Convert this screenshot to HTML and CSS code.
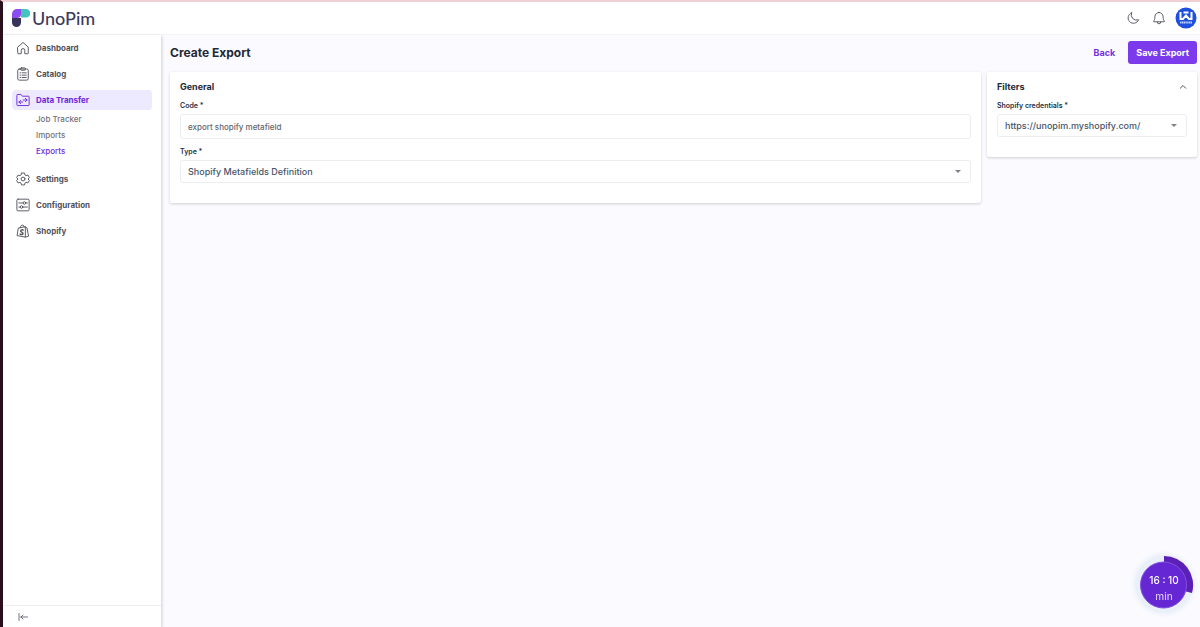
FILE: index.html
```html
<!DOCTYPE html>
<html lang="en">
<head>
    <meta charset="UTF-8">
    <meta name="viewport" content="width=device-width, initial-scale=1.0">
    <title>Create Export</title>
    <link rel="stylesheet" href="styles.css">
</head>
<body>
    <header class="topbar">
        <a class="logo" href="#">
            <svg width="18" height="18" viewBox="0 0 18 18" aria-hidden="true">
                <path d="M0 9V5a5 5 0 0 1 5-5h4v5a4 4 0 0 1-4 4z" fill="#8b4df0"/>
                <path d="M9 0h5a4.200 4.200 0 0 1 0 8.600H9z" fill="#45c4bd"/>
                <path d="M0 9h9v4.500a4.500 4.500 0 0 1-9 0z" fill="#38335a"/>
            </svg>
            <span>UnoPim</span>
        </a>
        <div class="topbar-actions">
            <button class="icon-btn" type="button" aria-label="Dark mode">
                <svg class="icon" width="14" height="14" viewBox="0 0 24 24"><path d="M9.500 3A9.300 9.300 0 1 0 21.500 15 9.300 9.300 0 0 1 9.500 3z"/></svg>
            </button>
            <button class="icon-btn" type="button" aria-label="Notifications">
                <svg class="icon" width="14" height="14" viewBox="0 0 24 24"><path d="M12 2.500a7 7 0 0 0-7 7c0 5-1 6-2.300 8-.3.600 0 1 .6 1h17.400c.6 0 .9-.4.600-1-1.300-2-2.300-3-2.300-8a7 7 0 0 0-7-7z"/><path d="M9 19a3 3 0 0 0 6 0"/></svg>
            </button>
            <button class="avatar" type="button" aria-label="Account">
                <svg width="22" height="22" viewBox="0 0 22 22">
                    <circle cx="11" cy="11" r="10.500" fill="#1f50dd"/>
                    <path d="M5.500 5v7h2.500L11 8.500l3 3.500h2.500V5M8.500 5.500h5" fill="none" stroke="#fff" stroke-width="2"/>
                    <path d="M5 15.500h12" stroke="#c4d2fa" stroke-width="2" stroke-dasharray="1.400 .4"/>
                </svg>
            </button>
        </div>
    </header>

    <div class="layout">
        <aside class="sidebar">
            <nav class="nav">
                <a class="nav-item" href="#">
                    <svg class="icon" width="14" height="14" viewBox="0 0 24 24"><path d="M3 10.500 12 2.500l9 8V21a.8.800 0 0 1-.8.800H15V16a3 3 0 0 0-6 0v5.800H3.800A.8.800 0 0 1 3 21z"/></svg>
                    Dashboard
                </a>
                <a class="nav-item" href="#">
                    <svg class="icon" width="14" height="14" viewBox="0 0 24 24"><rect x="3" y="3.500" width="18" height="19" rx="2.500"/><rect x="8" y="1.500" width="8" height="4" rx="1"/><path d="M7 10h1.500M11 10h6.500M7 14h1.500M11 14h6.500M7 18h1.500M11 18h6.500"/></svg>
                    Catalog
                </a>
                <a class="nav-item active" href="#">
                    <svg class="icon" width="14" height="14" viewBox="0 0 24 24"><path d="M1.500 3.500a1 1 0 0 1 1-1h6l2.500 3h10.500a1 1 0 0 1 1 1v14a1 1 0 0 1-1 1h-19a1 1 0 0 1-1-1z"/><path d="M5 15.500h6.500M8 12.500l-3 3 3 3M12.500 12H19M16 9l3 3-3 3"/></svg>
                    Data Transfer
                </a>
                <div class="subnav">
                    <a href="#">Job Tracker</a>
                    <a href="#">Imports</a>
                    <a class="current" href="#">Exports</a>
                </div>
                <a class="nav-item" href="#">
                    <svg class="icon" width="14" height="14" viewBox="0 0 24 24"><path d="M9.500 1.800h5l.8 3.200 2 1.200 3.200-.9 2.400 4.300-2.300 2.400 2.300 2.400-2.400 4.300-3.200-.9-2 1.200-.8 3.200h-5L8.700 19l-2-1.200-3.200.9-2.400-4.300L3.400 12 1.100 9.600l2.400-4.300 3.200.9 2-1.200z"/><circle cx="12" cy="12" r="3.300"/></svg>
                    Settings
                </a>
                <a class="nav-item" href="#">
                    <svg class="icon" width="14" height="14" viewBox="0 0 24 24"><rect x="1.500" y="2" width="21" height="20" rx="2"/><path d="M5 8.500h7M17 8.500h2.500M5 15.500h2M12 15.500h7.500"/><circle cx="14.500" cy="8.500" r="2.200"/><circle cx="9.500" cy="15.500" r="2.200"/></svg>
                    Configuration
                </a>
                <a class="nav-item" href="#">
                    <svg class="icon" width="14" height="14" viewBox="0 0 24 24"><path d="M4.500 7 16 4.500V22.500L2.500 20zM16 5l3 2 2.500 14-5.500 1.500M7 6.500C7.500 3.500 10 1 12 2c1.500.7 2 2 2.200 3"/><path d="M12.500 10.500c-2-1-4.500-.5-4.500 1.500s4 2 4 4.300c0 2-2.500 2.200-5 .9" stroke-width="2.400"/></svg>
                    Shopify
                </a>
            </nav>
            <button class="collapse" type="button" aria-label="Collapse menu">
                <svg class="icon" width="10" height="10" viewBox="0 0 20 20"><path d="M2 3v14M19 10H5M10 6l-4 4 4 4"/></svg>
            </button>
        </aside>

        <main class="content">
            <form>
                <div class="page-head">
                    <h1>Create Export</h1>
                    <div class="page-actions">
                        <a class="back" href="#">Back</a>
                        <button class="save" type="submit">Save Export</button>
                    </div>
                </div>
                <div class="panels">
                    <section class="card general">
                        <h2>General</h2>
                        <label for="code">Code *</label>
                        <input class="control" id="code" type="text" value="export shopify metafield">
                        <label for="type">Type *</label>
                        <div class="select">
                            <select class="control" id="type">
                                <option>Shopify Metafields Definition</option>
                            </select>
                            <svg width="6" height="4" viewBox="0 0 6 4"><path d="M0 0h6L3 3z"/></svg>
                        </div>
                    </section>
                    <section class="card filters">
                        <div class="card-head">
                            <h2>Filters</h2>
                            <button class="icon-btn" type="button" aria-label="Toggle filters">
                                <svg class="icon chevron" width="8" height="8" viewBox="0 0 16 16"><path d="M2.500 10.500 8 5l5.500 5.500"/></svg>
                            </button>
                        </div>
                        <label for="credentials">Shopify credentials *</label>
                        <div class="select">
                            <select class="control" id="credentials">
                                <option>https://unopim.myshopify.com/</option>
                            </select>
                            <svg width="6" height="4" viewBox="0 0 6 4"><path d="M0 0h6L3 3z"/></svg>
                        </div>
                    </section>
                </div>
            </form>
        </main>
    </div>

    <div class="timer">
        <svg width="60" height="60" viewBox="0 0 60 60" aria-hidden="true">
            <circle cx="30" cy="30" r="29" fill="#e9f0fa"/>
            <path d="M30 2A29 29 0 0 1 58 39L30 32z" fill="#5b21b6"/>
            <circle cx="29.500" cy="31" r="23" fill="#6526d3" stroke="#8250df"/>
        </svg>
        <div class="timer-text">
            <span>16 : 10</span>
            <span class="unit">min</span>
        </div>
    </div>
</body>
</html>
```
FILE: styles.css
```css
* {
    box-sizing: border-box;
}
body {
    margin: 0;
    min-height: 100vh;
    display: flex;
    flex-direction: column;
    border-top: 2px solid #f0cfd5;
    border-left: 3px solid #2a0f1c;
    background: #fbfbff;
    color: #1f2937;
    font-family: Inter, "Liberation Sans", sans-serif;
    font-size: 8px;
}
a {
    color: inherit;
    text-decoration: none;
}
button, input, select {
    font-family: inherit;
}
button {
    border: none;
    background: none;
    padding: 0;
    cursor: pointer;
}
.icon {
    flex: none;
    fill: none;
    stroke: currentColor;
    stroke-width: 1.6;
    stroke-linecap: round;
    stroke-linejoin: round;
}
.topbar {
    display: flex;
    justify-content: space-between;
    align-items: center;
    height: 33px;
    padding: 0 3px 1px 9px;
    background: #fff;
    border-bottom: 1px solid #f3f4f6;
}
.logo {
    display: flex;
    align-items: center;
    gap: 2px;
    color: #3c3a5c;
    font-family: Lato, sans-serif;
    font-size: 18px;
    font-weight: 500;
    line-height: 20px;
}
.topbar-actions {
    display: flex;
    align-items: center;
    gap: 12px;
    color: #52525b;
}
.icon-btn {
    display: flex;
    color: #52525b;
}
.avatar {
    display: flex;
    margin-left: -3px;
}
.layout {
    flex: 1;
    display: flex;
}
.sidebar {
    flex: none;
    width: 158px;
    display: flex;
    flex-direction: column;
    background: #fff;
    box-shadow: 1px 1px 3px rgba(0, 0, 0, 0.18);
}
.nav {
    flex: 1;
    display: flex;
    flex-direction: column;
    gap: 6px;
    padding: 3px 9px;
}
.nav-item {
    display: flex;
    align-items: center;
    gap: 6px;
    height: 20px;
    padding: 0 4px;
    border-radius: 4px;
    color: #52525b;
    font-weight: 700;
}
.nav-item.active {
    background: #ede9fe;
    color: #6d28d9;
}
.subnav {
    display: flex;
    flex-direction: column;
    margin-top: -6px;
    padding: 1px 0 4px 24px;
    color: #71717a;
    font-weight: 500;
    line-height: 16px;
}
.subnav .current {
    color: #6d28d9;
}
.collapse {
    display: flex;
    align-items: center;
    height: 22px;
    padding: 0 15px;
    border-top: 1px solid #eceef0;
    color: #52525b;
}
.content {
    flex: 1;
    padding: 6px 3px 6px 9px;
}
.page-head {
    display: flex;
    justify-content: space-between;
    align-items: center;
}
h1, h2 {
    margin: 0;
    font-weight: 700;
}
h1 {
    font-size: 12px;
}
h2 {
    font-size: 9px;
    line-height: 14px;
}
.page-actions {
    display: flex;
    align-items: center;
    gap: 13px;
    font-size: 9px;
    font-weight: 700;
}
.back {
    color: #7331dc;
}
.save {
    height: 23px;
    padding: 0 8px;
    border-radius: 3px;
    background: #7c3aed;
    color: #fff;
    font-size: 9px;
    font-weight: 700;
}
.panels {
    display: flex;
    align-items: flex-start;
    gap: 6px;
    margin-top: 8px;
}
.card {
    padding: 8px 10px 20px;
    border-radius: 2px;
    background: #fff;
    box-shadow: 0 1px 3px rgba(0, 0, 0, 0.18);
}
.general {
    flex: 1;
}
.filters {
    width: 210px;
}
.card-head {
    display: flex;
    justify-content: space-between;
    align-items: center;
}
.chevron {
    stroke-width: 2;
}
label {
    display: block;
    margin: 6px 0 3px;
    color: #27303f;
    font-size: 7px;
    font-weight: 600;
    line-height: 11px;
}
.control {
    display: block;
    width: 100%;
    height: 25px;
    padding: 0 7px;
    border: 1px solid #ebedf0;
    border-radius: 3px;
    background: #fff;
    color: #64666d;
    font-size: 8px;
    font-weight: 500;
}
.control + label {
    margin-top: 7px;
}
.select {
    display: grid;
    align-items: center;
}
.select > * {
    grid-area: 1 / 1;
}
.select .control {
    appearance: none;
    height: 23px;
    color: #475569;
    font-size: 9px;
}
.select svg {
    justify-self: end;
    margin-right: 10px;
    fill: #7c828c;
    pointer-events: none;
}
/* session timer floats over the page */
.timer {
    position: fixed;
    right: 6px;
    bottom: 13px;
    display: grid;
    place-items: center;
}
.timer > * {
    grid-area: 1 / 1;
}
.timer svg {
    filter: drop-shadow(0 0 3px #e3eaf8);
}
.timer-text {
    display: flex;
    flex-direction: column;
    align-items: center;
    z-index: 1;
    margin-top: 8px;
    color: #fff;
    font-size: 10px;
    font-weight: 500;
    line-height: 16px;
}
.timer-text .unit {
    color: #d6c3f7;
}
```
